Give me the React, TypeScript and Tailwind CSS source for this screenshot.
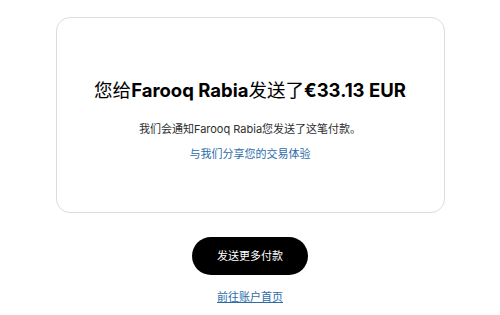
export default function App() {
  return (
    <div
      className="w-[500px] h-[315px] bg-white flex flex-col items-center"
      style={{ fontFamily: 'Inter, "Noto Sans CJK SC", sans-serif' }}
    >
      {/* CARD */}
      <div className="mt-[17px] w-[389px] h-[196px] rounded-[14px] border border-[#dcdcdc] flex flex-col items-center pt-[60px]">
        <h1 className="text-[18.5px] leading-[24px] text-black whitespace-nowrap">
          您给<span className="font-bold">Farooq Rabia</span>发送了
          <span className="font-bold">€33.13 EUR</span>
        </h1>
        <p className="mt-[20px] text-[11px] leading-[14px] text-[#2c2e2f]">
          我们会通知Farooq Rabia您发送了这笔付款。
        </p>
        <a className="mt-[11px] text-[11px] leading-[14px] text-[#2d6ca8]">
          与我们分享您的交易体验
        </a>
      </div>

      {/* ACTIONS */}
      <button className="mt-[24px] w-[116px] h-[38px] rounded-full bg-black text-white text-[11px]">
        发送更多付款
      </button>
      <a className="mt-[15px] text-[11px] leading-[14px] text-[#2d6ca8] underline">
        前往账户首页
      </a>
    </div>
  );
}
